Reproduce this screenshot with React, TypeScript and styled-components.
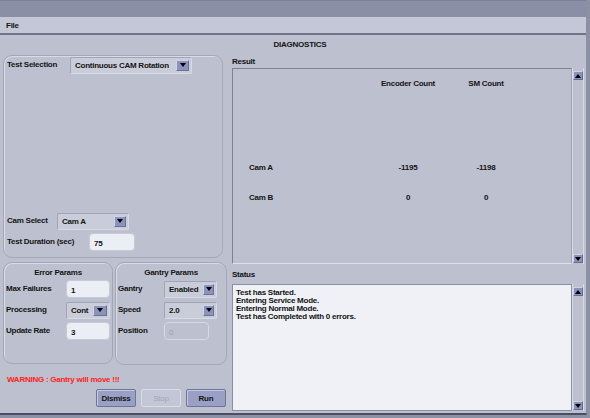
import styled, { createGlobalStyle } from 'styled-components';

const Global = createGlobalStyle`
  body {
    margin: 0;
    background: #8d91a6;
    font-family: "Liberation Sans", Arial, sans-serif;
  }
`;

const Window = styled.div`
  width: 586px;
  height: 413px;
  background: #bdc0cf;
  border-right: 1px solid #8a8ea3;
  border-bottom: 2px solid #4b4f63;
  display: flex;
  flex-direction: column;
  color: #141414;
  font-size: 8px;
  font-weight: bold;
  letter-spacing: -0.25px;
  overflow: hidden;
`;

const TitleBar = styled.div`
  height: 17px;
  flex: none;
  background: #8a8fa5;
  border-top: 1px solid #7b8096;
  box-sizing: border-box;
`;

const MenuBar = styled.div`
  height: 16px;
  flex: none;
  background: #c4c7d5;
  border-bottom: 2px solid #6f7388;
  display: flex;
  align-items: center;
  padding-left: 6px;
`;

const Heading = styled.div`
  height: 20px;
  line-height: 20px;
  flex: none;
  text-align: center;
  padding-left: 14px;
`;

const Body = styled.div`
  flex: 1;
  display: grid;
  grid-template-columns: 224px 352px;
  column-gap: 5px;
  padding-left: 3px;
  min-height: 0;
`;

const LeftColumn = styled.div`
  display: flex;
  flex-direction: column;
`;

const Group = styled.div<{ $w: number; $h: number; $pad?: number }>`
  width: ${({ $w }) => $w}px;
  height: ${({ $h }) => $h}px;
  box-sizing: border-box;
  border: 1px solid #a3a7ba;
  box-shadow: inset 1px 1px 0 #d9dbe6;
  border-radius: 9px;
  display: flex;
  flex-direction: column;
  padding: 0 2px 0 ${({ $pad }) => $pad ?? 2}px;
`;

const GroupTitle = styled.div`
  height: 17px;
  line-height: 19px;
  text-align: center;
`;

const ParamsRow = styled.div`
  display: flex;
  gap: 2px;
  margin-top: 4px;
`;

const FieldRow = styled.div<{ $top?: number; $bottom?: number }>`
  display: flex;
  align-items: center;
  height: 18px;
  margin-top: ${({ $top }) => $top ?? 0}px;
  margin-bottom: ${({ $bottom }) => $bottom ?? 0}px;
`;

const Label = styled.span<{ $w: number }>`
  width: ${({ $w }) => $w}px;
  flex: none;
  margin-bottom: 1px;
`;

const Combo = styled.div<{ $w: number }>`
  width: ${({ $w }) => $w}px;
  height: 17px;
  box-sizing: border-box;
  display: flex;
  align-items: center;
  background: #c9ccd9;
  border: 1px solid #a0a4b8;
  border-right-color: #d8dae4;
  border-bottom-color: #d8dae4;
  border-radius: 2px;
`;

const ComboValue = styled.span`
  flex: 1;
  padding-left: 4px;
`;

const ArrowButton = styled.span<{ $w?: number }>`
  width: ${({ $w }) => $w ?? 13}px;
  height: 11px;
  margin-right: 2px;
  box-sizing: border-box;
  background: #8b92bc;
  border-top: 1px solid #d0d3e4;
  border-left: 1px solid #d0d3e4;
  border-bottom: 1px solid #6b7196;
  border-right: 1px solid #6b7196;
  display: flex;
  align-items: center;
  justify-content: center;
`;

const Triangle = styled.span<{ $up?: boolean }>`
  width: 0;
  height: 0;
  border-left: 3px solid transparent;
  border-right: 3px solid transparent;
  ${({ $up }) => ($up ? 'border-bottom: 4px solid #000;' : 'border-top: 4px solid #000;')}
`;

const Input = styled.div<{ $w: number; $disabled?: boolean }>`
  width: ${({ $w }) => $w}px;
  height: 18px;
  box-sizing: border-box;
  border-radius: 4px;
  padding: 2px 0 0 4px;
  display: flex;
  align-items: center;
  background: ${({ $disabled }) => ($disabled ? '#bdc0cf' : '#eceef5')};
  border: 1px solid ${({ $disabled }) => ($disabled ? '#d7d9e3' : '#c8cad7')};
  color: ${({ $disabled }) => ($disabled ? '#9a9db1' : '#141414')};
  font-weight: ${({ $disabled }) => ($disabled ? 'normal' : 'bold')};
`;

const Warning = styled.div`
  color: #ff1c1c;
  margin: 9px 0 0 4px;
  height: 12px;
  line-height: 12px;
`;

const ButtonBar = styled.div`
  display: flex;
  justify-content: flex-end;
  gap: 5px;
  margin-top: 3px;
  padding-right: 1px;
`;

const Button = styled.div<{ $disabled?: boolean }>`
  width: 40px;
  height: 18px;
  box-sizing: border-box;
  display: flex;
  align-items: center;
  justify-content: center;
  padding-top: 1px;
  border-radius: 2px;
  background: ${({ $disabled }) => ($disabled ? '#c3c6d6' : '#9aa0c5')};
  border: 1px solid ${({ $disabled }) => ($disabled ? '#dadce6' : '#6f7596')};
  box-shadow: ${({ $disabled }) => ($disabled ? 'none' : 'inset 1px 1px 0 #c4c8e0')};
  color: ${({ $disabled }) => ($disabled ? '#a2a5b8' : '#141414')};
  font-weight: ${({ $disabled }) => ($disabled ? 'normal' : 'bold')};
`;

const RightColumn = styled.div`
  display: flex;
  flex-direction: column;
`;

const SectionLabel = styled.div<{ $h: number }>`
  height: ${({ $h }) => $h}px;
  display: flex;
  align-items: center;
`;

const PaneRow = styled.div<{ $h: number }>`
  height: ${({ $h }) => $h}px;
  display: flex;
`;

const ResultPane = styled.div`
  width: 341px;
  box-sizing: border-box;
  border-top: 1px solid #7e8297;
  border-left: 1px solid #7e8297;
  border-bottom: 1px solid #dfe1ea;
  border-right: 1px solid #9ea2b5;
  padding-left: 16px;
`;

const StatusPane = styled.div`
  width: 341px;
  box-sizing: border-box;
  background: #eff1f6;
  border: 1px solid #8a8ea3;
  padding: 4px 3px;
  line-height: 8px;
`;

const ScrollTrack = styled.div`
  width: 12px;
  box-sizing: border-box;
  border-left: 1px solid #d9dbe5;
  border-right: 1px solid #d9dbe5;
  display: flex;
  flex-direction: column;
  justify-content: space-between;
  align-items: center;
  padding: 3px 0 1px;
`;

const ScrollArrow = styled.div`
  width: 10px;
  height: 9px;
  box-sizing: border-box;
  background: #8a91bb;
  border-top: 1px solid #cfd2e4;
  border-left: 1px solid #cfd2e4;
  border-bottom: 1px solid #666c92;
  border-right: 1px solid #666c92;
  display: flex;
  align-items: center;
  justify-content: center;
`;

const TableRow = styled.div<{ $top: number }>`
  display: grid;
  grid-template-columns: 120px 78px 78px;
  height: 12px;
  align-items: center;
  margin-top: ${({ $top }) => $top}px;
`;

const Cell = styled.span<{ $center?: boolean }>`
  text-align: ${({ $center }) => ($center ? 'center' : 'left')};
`;

function Scrollbar() {
  return (
    <ScrollTrack>
      <ScrollArrow>
        <Triangle $up />
      </ScrollArrow>
      <ScrollArrow>
        <Triangle />
      </ScrollArrow>
    </ScrollTrack>
  );
}

function Select({ w, value, arrowW }: { w: number; value: string; arrowW?: number }) {
  return (
    <Combo $w={w}>
      <ComboValue>{value}</ComboValue>
      <ArrowButton $w={arrowW}>
        <Triangle />
      </ArrowButton>
    </Combo>
  );
}

const results = [
  { name: 'Cam A', encoder: '-1195', sm: '-1198', top: 72 },
  { name: 'Cam B', encoder: '0', sm: '0', top: 18 },
];

const statusLines = [
  'Test has Started.',
  'Entering Service Mode.',
  'Entering Normal Mode.',
  'Test has Completed with 0 errors.',
];

export default function App() {
  return (
    <>
      <Global />
      <Window>
        <TitleBar />
        <MenuBar>File</MenuBar>
        <Heading>DIAGNOSTICS</Heading>
        <Body>
          <LeftColumn>
            <Group $w={220} $h={203} $pad={3}>
              <FieldRow $top={0}>
                <Label $w={63}>Test Selection</Label>
                <Select w={122} value="Continuous CAM Rotation" />
              </FieldRow>
              <FieldRow $top={138} $bottom={3}>
                <Label $w={50}>Cam Select</Label>
                <Select w={72} value="Cam A" arrowW={12} />
              </FieldRow>
              <FieldRow>
                <Label $w={82}>Test Duration (sec)</Label>
                <Input $w={46}>75</Input>
              </FieldRow>
            </Group>
            <ParamsRow>
              <Group $w={110} $h={102}>
                <GroupTitle>Error Params</GroupTitle>
                <FieldRow $bottom={3}>
                  <Label $w={60}>Max Failures</Label>
                  <Input $w={45}>1</Input>
                </FieldRow>
                <FieldRow $bottom={3}>
                  <Label $w={60}>Processing</Label>
                  <Select w={46} value="Cont" arrowW={14} />
                </FieldRow>
                <FieldRow>
                  <Label $w={60}>Update Rate</Label>
                  <Input $w={45}>3</Input>
                </FieldRow>
              </Group>
              <Group $w={112} $h={103} $pad={2}>
                <GroupTitle>Gantry Params</GroupTitle>
                <FieldRow $bottom={3}>
                  <Label $w={46}>Gantry</Label>
                  <Select w={53} value="Enabled" arrowW={11} />
                </FieldRow>
                <FieldRow $bottom={3}>
                  <Label $w={46}>Speed</Label>
                  <Select w={53} value="2.0" arrowW={11} />
                </FieldRow>
                <FieldRow>
                  <Label $w={46}>Position</Label>
                  <Input $w={45} $disabled>
                    0
                  </Input>
                </FieldRow>
              </Group>
            </ParamsRow>
            <Warning>WARNING : Gantry will move !!!</Warning>
            <ButtonBar>
              <Button>Dismiss</Button>
              <Button $disabled>Stop</Button>
              <Button>Run</Button>
            </ButtonBar>
          </LeftColumn>
          <RightColumn>
            <SectionLabel $h={13}>Result</SectionLabel>
            <PaneRow $h={196}>
              <ResultPane>
                <TableRow $top={8}>
                  <Cell />
                  <Cell $center>Encoder Count</Cell>
                  <Cell $center>SM Count</Cell>
                </TableRow>
                {results.map((r) => (
                  <TableRow key={r.name} $top={r.top}>
                    <Cell>{r.name}</Cell>
                    <Cell $center>{r.encoder}</Cell>
                    <Cell $center>{r.sm}</Cell>
                  </TableRow>
                ))}
              </ResultPane>
              <Scrollbar />
            </PaneRow>
            <SectionLabel $h={20}>Status</SectionLabel>
            <PaneRow $h={127}>
              <StatusPane>
                {statusLines.map((l) => (
                  <div key={l}>{l}</div>
                ))}
              </StatusPane>
              <Scrollbar />
            </PaneRow>
          </RightColumn>
        </Body>
      </Window>
    </>
  );
}
